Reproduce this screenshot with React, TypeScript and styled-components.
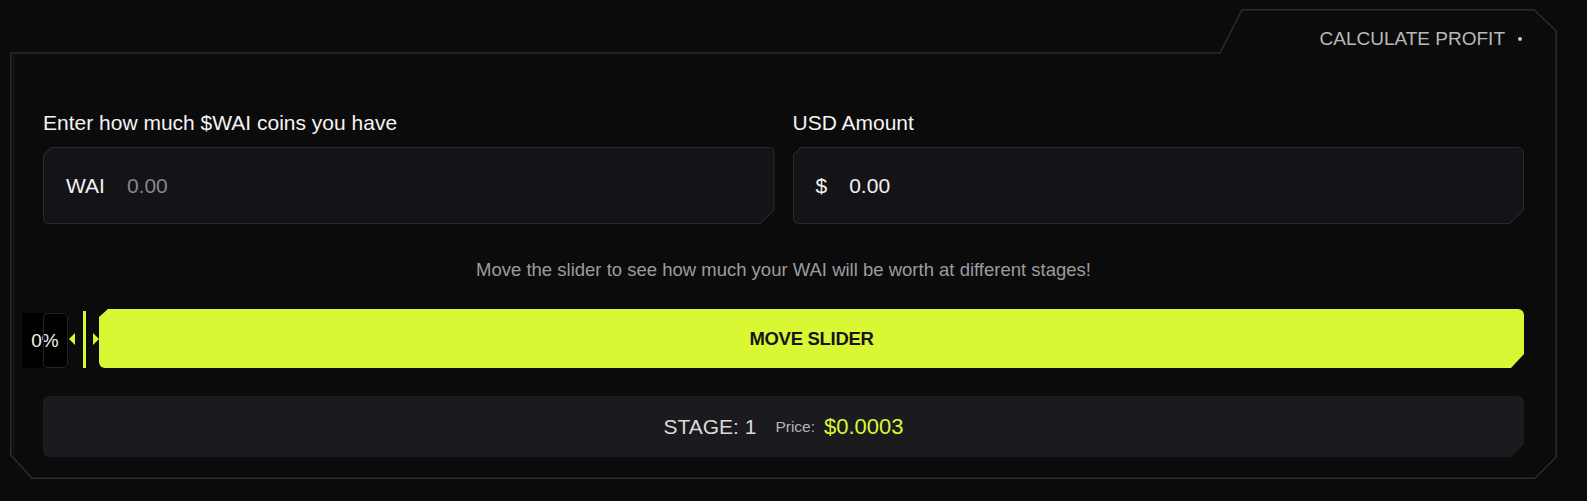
import React from 'react';
import styled, { createGlobalStyle } from 'styled-components';

const GlobalStyle = createGlobalStyle`
    html, body {
        margin: 0;
        padding: 0;
        background: #0b0b0c;
    }
    body {
        font-family: "Liberation Sans", Arial, sans-serif;
        color: #f2f2f2;
    }
`;

const GREEN = '#daf734';

// frame outline of the card, with the tab in the top right
const FrameOutline: React.FC = () => (
    <Outline viewBox='0 0 1547 470' width='1547' height='470'>
        <path
            d='M0.75 44 H1210 L1232 0.75 H1524 L1546.25 22 V448 L1525 469.25 H22 L0.75 446 Z'
            fill='none'
            stroke='#2d2d2f'
            strokeWidth='1.5'
        />
        <path d='M3.5 46 V444' stroke='#1c1c1e' strokeWidth='1' />
    </Outline>
);

const InputField: React.FC<{ prefix: string; value: string; muted?: boolean }> = ({
    prefix,
    value,
    muted
}) => (
    <Field>
        <FieldInner>
            <Prefix>{prefix}</Prefix>
            <Value $muted={muted}>{value}</Value>
        </FieldInner>
    </Field>
);

export default function App() {
    return (
        <>
            <GlobalStyle />
            <Page>
                <Card>
                    <FrameOutline />
                    <Header>
                        <Title>CALCULATE PROFIT</Title>
                        <Dot />
                    </Header>
                    <Body>
                        <Inputs>
                            <Column>
                                <Label>Enter how much $WAI coins you have</Label>
                                <InputField prefix='WAI' value='0.00' muted />
                            </Column>
                            <Column>
                                <Label>USD Amount</Label>
                                <InputField prefix='$' value='0.00' />
                            </Column>
                        </Inputs>
                        <Hint>Move the slider to see how much your WAI will be worth at different stages!</Hint>
                        <SliderRow>
                            <PercentTag>0%</PercentTag>
                            <Thumb>
                                <Arrow $dir='left' />
                                <ThumbLine />
                                <Arrow $dir='right' />
                            </Thumb>
                            <Track>MOVE SLIDER</Track>
                        </SliderRow>
                        <StageBar>
                            <StageText>STAGE: 1</StageText>
                            <PriceLabel>Price:</PriceLabel>
                            <PriceValue>$0.0003</PriceValue>
                        </StageBar>
                    </Body>
                </Card>
            </Page>
        </>
    );
}

const Page = styled.div`
    padding: 9px 30px 22px 10px;
`;
const Card = styled.div`
    position: relative;
    width: 1547px;
    height: 470px;
`;
const Outline = styled.svg`
    position: absolute;
    inset: 0;
    pointer-events: none;
`;
const Header = styled.div`
    height: 60px;
    display: flex;
    justify-content: flex-end;
    align-items: center;
    gap: 13px;
    padding-right: 35px;
`;
const Title = styled.span`
    font-size: 19px;
    color: #b9b9bb;
`;
const Dot = styled.span`
    width: 4px;
    height: 4px;
    border-radius: 50%;
    background: #c9c9c9;
`;
const Body = styled.div`
    padding: 41px 33px 0 33px;
`;
const Inputs = styled.div`
    display: grid;
    grid-template-columns: 1fr 1fr;
    gap: 18px;
`;
const Column = styled.div`
    display: flex;
    flex-direction: column;
    gap: 12px;
`;
const Label = styled.div`
    font-size: 21px;
    line-height: 25px;
    color: #f4f4f4;
`;
const Field = styled.div`
    padding: 1px;
    background: #29292d;
    border-radius: 6px;
    clip-path: polygon(8px 0, 100% 0, 100% calc(100% - 14px), calc(100% - 14px) 100%, 0 100%, 0 8px);
`;
const FieldInner = styled.div`
    height: 75px;
    display: flex;
    align-items: center;
    gap: 22px;
    padding-left: 22px;
    background: #141418;
    border-radius: 5px;
    clip-path: polygon(7.5px 0, 100% 0, 100% calc(100% - 13.5px), calc(100% - 13.5px) 100%, 0 100%, 0 7.5px);
`;
const Prefix = styled.span`
    font-size: 21px;
    color: #f2f2f2;
`;
const Value = styled.span<{ $muted?: boolean }>`
    font-size: 21px;
    color: ${({ $muted }) => ($muted ? '#86868b' : '#f2f2f2')};
`;
const Hint = styled.div`
    margin-top: 35px;
    text-align: center;
    font-size: 18.5px;
    line-height: 22px;
    color: #9c9c9f;
`;
const SliderRow = styled.div`
    margin: 28px 0 0 -21px;
    display: flex;
    align-items: center;
    height: 59px;
`;
const PercentTag = styled.div`
    position: relative;
    width: 46px;
    height: 55px;
    margin-top: 4px;
    background: #000;
    display: flex;
    align-items: center;
    justify-content: center;
    font-size: 19px;
    color: #f2f2f2;
    &::after {
        content: '';
        position: absolute;
        top: 0;
        bottom: 0;
        right: 0;
        width: 25px;
        box-sizing: border-box;
        border: 1px solid #232325;
        border-radius: 4px;
    }
`;
const Thumb = styled.div`
    width: 31px;
    height: 59px;
    display: flex;
    align-items: center;
    padding-left: 1px;
    box-sizing: border-box;
`;
const Arrow = styled.span<{ $dir: 'left' | 'right' }>`
    width: 0;
    height: 0;
    border-top: 6px solid transparent;
    border-bottom: 6px solid transparent;
    ${({ $dir }) =>
        $dir === 'left'
            ? `border-right: 6px solid ${GREEN}; margin-right: 8px;`
            : `border-left: 6px solid ${GREEN}; margin-left: 7px;`}
`;
const ThumbLine = styled.span`
    width: 2.5px;
    height: 57px;
    margin-top: 2px;
    background: ${GREEN};
`;
const Track = styled.div`
    flex: 1;
    height: 59px;
    display: flex;
    align-items: center;
    justify-content: center;
    background: ${GREEN};
    border-radius: 6px;
    clip-path: polygon(9px 0, 100% 0, 100% calc(100% - 14px), calc(100% - 13px) 100%, 0 100%, 0 8px);
    font-size: 18.5px;
    font-weight: 700;
    color: #151515;
    letter-spacing: -0.3px;
`;
const StageBar = styled.div`
    margin-top: 28px;
    height: 61px;
    display: flex;
    align-items: center;
    justify-content: center;
    background: #1b1b1f;
    border-radius: 6px;
    clip-path: polygon(0 0, 100% 0, 100% calc(100% - 13px), calc(100% - 13px) 100%, 0 100%);
`;
const StageText = styled.span`
    font-size: 21px;
    color: #dadada;
    margin-right: 19px;
`;
const PriceLabel = styled.span`
    font-size: 15.5px;
    color: #b3b3b5;
    margin-right: 9px;
`;
const PriceValue = styled.span`
    font-size: 22px;
    color: ${GREEN};
`;
